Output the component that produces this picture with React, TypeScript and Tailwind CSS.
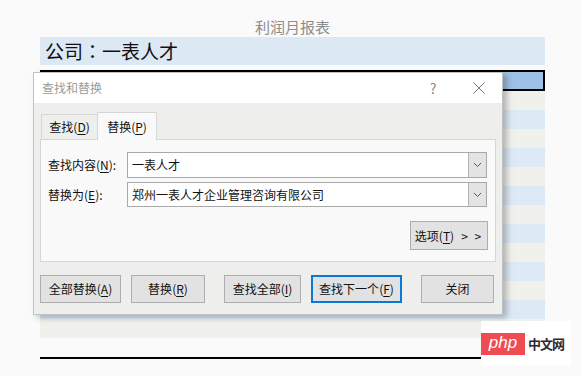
import React from "react";

const FONT = "font-['Noto_Sans_CJK_SC','Noto_Sans',sans-serif]";

function Key({ label, k }: { label: string; k: string }) {
  return (
    <span>
      {label}(<u className="underline-offset-2">{k}</u>)
    </span>
  );
}

function Combo({ value, h }: { value: string; h: string }) {
  return (
    <div className={`flex w-[360px] ${h} border border-[#a9a9a9] bg-white`}>
      <div className="flex-1 pl-[4px] flex items-center text-[12px] text-[#111]">{value}</div>
      <div className="w-[18px] border-l border-[#b4b4b4] bg-[#e3e3e3] flex items-center justify-center">
        <svg width="9" height="6" viewBox="0 0 9 6">
          <path d="M1 1 L4.5 4.5 L8 1" fill="none" stroke="#555" strokeWidth="1" />
        </svg>
      </div>
    </div>
  );
}

function Btn({ children, w, primary }: { children: React.ReactNode; w: string; primary?: boolean }) {
  return (
    <div
      className={`${w} h-[28px] flex items-center justify-center text-[12px] text-[#111] bg-[#e2e2e2] ${
        primary ? "border-2 border-[#0a78d4]" : "border border-[#adadad]"
      }`}
    >
      {children}
    </div>
  );
}

export default function App() {
  const rows = Array.from({ length: 13 }, (_, i) => i);
  return (
    <div className={`relative w-[581px] h-[376px] overflow-hidden bg-[#fafafa] ${FONT}`}>
      {/* spreadsheet behind */}
      <div className="ml-[40px] w-[505px] flex flex-col">
        <div className="h-[37px] pt-[17px] text-center text-[15px] leading-[20px] text-[#8c8c8c]">利润月报表</div>
        <div className="h-[28px] bg-[#dce8f4] pl-[5px] text-[19px] leading-[28px] text-[#111]">
          公司<span className="font-['Noto_Sans_CJK_TC',sans-serif]">：</span>一表人才
        </div>
        <div className="h-[5px]" />
        <div className="h-[21px] grid grid-cols-7 border-t-2 border-black">
          {[0, 1, 2, 3, 4, 5].map((c) => (
            <div key={c} className={c > 0 ? "border-l border-black" : ""} />
          ))}
          <div className="border-2 border-t-0 border-black bg-[#9dc2e6]" />
        </div>
        {rows.map((i) => (
          <div key={i} className={`h-[19px] ${i % 2 === 0 ? "bg-[#f0f0ec]" : "bg-[#dde9f5]"}`} />
        ))}
        <div className="h-[19px]" />
        <div className="h-[2px] bg-black" />
      </div>

      {/* find & replace dialog */}
      <div className="absolute left-[33px] top-[72px] w-[470px] h-[243px] flex flex-col border border-[#c2c2c2] bg-[#eeeeec] shadow-[4px_3px_6px_rgba(0,0,0,0.25)]">
        <div className="h-[30px] bg-white flex items-center pl-[8px] text-[12px] text-[#9a9a9a]">
          <span className="flex-1">查找和替换</span>
          <span className="w-[14px] text-center text-[14px] text-[#888] mr-[33px]">?</span>
          <svg width="12" height="12" viewBox="0 0 12 12" className="mr-[17px]">
            <path d="M0.5 0.5 L11.5 11.5 M11.5 0.5 L0.5 11.5" stroke="#777" strokeWidth="1" />
          </svg>
        </div>

        <div className="flex-1 px-[6px] pt-[9px]">
          <div className="flex items-end pl-[1px]">
            <div className="w-[56px] h-[25px] border-l border-t border-[#d6d6d6] flex items-center justify-center text-[12px] text-[#111]">
              <Key label="查找" k="D" />
            </div>
            <div className="w-[60px] h-[28px] -mb-px relative z-10 border border-b-0 border-[#d6d6d6] bg-[#f9f9f9] flex items-center justify-center text-[12px] text-[#111]">
              <Key label="替换" k="P" />
            </div>
          </div>
          <div className="h-[123px] border border-[#d6d6d6] bg-[#f9f9f9] pt-[12px] pl-[7px] flex flex-col">
            <div className="flex items-center">
              <div className="w-[79px] text-[12px] text-[#111]">
                <Key label="查找内容" k="N" />:
              </div>
              <Combo value="一表人才" h="h-[26px]" />
            </div>
            <div className="flex items-center mt-[4px]">
              <div className="w-[79px] text-[12px] text-[#111]">
                <Key label="替换为" k="E" />:
              </div>
              <Combo value="郑州一表人才企业管理咨询有限公司" h="h-[25px]" />
            </div>
            <div className="flex justify-end pr-[7px] mt-[14px]">
              <div className="w-[78px] h-[29px] flex items-center justify-center border border-[#adadad] bg-[#e2e2e2] text-[12px] text-[#111]">
                <Key label="选项" k="T" />
                <span className="ml-[7px] tracking-[2px]">&gt; &gt;</span>
              </div>
            </div>
          </div>

          <div className="flex mt-[13px]">
            <Btn w="w-[81px]"><Key label="全部替换" k="A" /></Btn>
            <div className="ml-[10px]"><Btn w="w-[74px]"><Key label="替换" k="R" /></Btn></div>
            <div className="ml-[19px]"><Btn w="w-[77px]"><Key label="查找全部" k="I" /></Btn></div>
            <div className="ml-[10px]"><Btn w="w-[91px]" primary><Key label="查找下一个" k="F" /></Btn></div>
            <div className="ml-[19px]"><Btn w="w-[73px]">关闭</Btn></div>
          </div>
        </div>
      </div>

      {/* watermark badge */}
      <div className="absolute left-[481px] top-[321px] w-[90px] h-[45px] bg-white flex items-center">
        <div className="w-[44px] h-[22px] bg-[#ee4b52] flex items-center justify-center text-white text-[17px] italic leading-none font-['Liberation_Sans',sans-serif] pb-[2px]">
          php
        </div>
        <div className="ml-[3px] text-[13px] font-bold leading-none text-[#2e2833] tracking-[-1px]">中文网</div>
      </div>
    </div>
  );
}
